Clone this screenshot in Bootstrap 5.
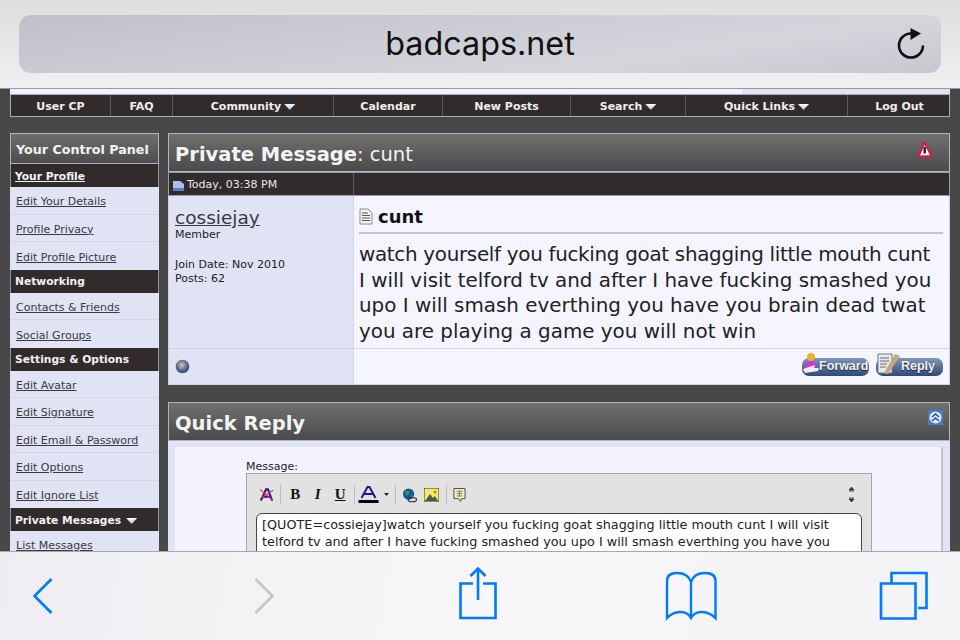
<!DOCTYPE html>
<html lang="en"><head><meta charset="utf-8"><title>badcaps.net</title>
<link href="https://cdn.jsdelivr.net/npm/bootstrap@5.3.0/dist/css/bootstrap.min.css" rel="stylesheet">
<style>
html,body{height:640px;overflow:hidden;background:#484848}
body{font-family:"DejaVu Sans",sans-serif;font-size:11px;color:#1c1c1c}
a{color:#3a3a3f}
.shell{width:960px;height:640px}
.urlzone{height:88px;padding:15px 19px;flex:none;background:linear-gradient(180deg,#dedede,#f0f0f3)}
.urlbox{height:58px;border-radius:12px;background:linear-gradient(172deg,#bfc0ca,#d5d6dc 70%,#c6c7d0);position:relative;font-family:Inter,"Liberation Sans",sans-serif;font-size:32.300px;color:#111}
.reload{position:absolute;right:15px;top:12px}
.webview{flex:1;min-height:0;overflow:hidden;background:#484848;padding:0 10px;border-top:1px solid #9a9a9a}
.strip{height:5px;background:linear-gradient(90deg,#f3f3ff 732px,#dfe3f3 733px)}
.topnav{display:grid;grid-template-columns:100px 62px 161px 109px 128px 115px 162px 103px;height:23px;background:#312b2b;border:1px solid #a9abb8}
.topnav a{display:flex;align-items:center;justify-content:center;gap:3px;padding-top:3px;color:#eee;font-weight:700;font-size:11px;text-decoration:none;border-right:1px solid #5a5a60}
.topnav a:last-child{border-right:0}
.tri{width:11px;height:6px;flex:none;background:linear-gradient(#fff,#9fc3e4);clip-path:polygon(0 0,100% 0,50% 100%)}
.columns{gap:9px;margin-top:16px}
.sidepane{width:149px;flex:none;background:#dfe3f3}
.sidehead{height:31px;border:1px solid #aeb2c8;background:linear-gradient(#6e6e6e,#4d4d4d);color:#f2f2f2;font-weight:700;font-size:12.700px;padding:2px 0 0 5px;display:flex;align-items:center}
.sidesec{height:23px;background:#312b2b;color:#f2f2f2;font-weight:700;font-size:10.700px;padding:3px 0 0 4px;display:flex;align-items:center;gap:5px;border:1px solid #8f90a0;border-width:0 1px}
.sidesec a{color:#f2f2f2}
.sidelink{height:27.500px;display:flex;align-items:center;padding:4px 0 0 6px;border-bottom:1px solid #d2d6e6;font-size:11px}
.sidelink.endrow{border-bottom:0}
.mainpane{flex:1;min-width:0}
.panelhead{height:39px;border:1px solid #b0b3c4;background:linear-gradient(#707070,#4a4a4a);color:#f4f4f4;font-size:19.500px;padding:5px 0 0 6px;display:flex;align-items:center;justify-content:space-between}
.warnico{margin:-12px 16px 0 0}
.collapseico{margin:-14px 6px 0 0}
.datebar{height:24px;background:#312b2b;border:1px solid #9a9caa;display:flex;color:#e8e8e8;font-size:11px}
.datecell{width:185px;border-right:1px solid #5a5a60;display:flex;align-items:center;gap:3px;padding:3px 0 0 4px}
.msgrow{display:flex;height:152px;border-left:1px solid #cfd3e4;border-right:1px solid #cfd3e4}
.authorcol{width:185px;flex:none;background:#dfe3f3;border-right:1px solid #d2d6e6;padding:12px 6px;line-height:14px}
.authorcol a{font-size:18.500px;line-height:20px;display:block}
.bodycol{flex:1;min-width:0;background:#f5f5ff;padding:10px 6px 0 5px}
.posttitle{font-size:18px;font-weight:700;color:#111;display:flex;align-items:center;gap:5px;height:28px;border-bottom:2px solid #c4c5cd;padding-bottom:6px}
.posttext{font-size:19.900px;line-height:25.500px;margin-top:8px;color:#222;white-space:nowrap}
.tightline{letter-spacing:-.3px}
.footrow{display:flex;height:37px;border:1px solid #cfd3e4}
.footleft{width:185px;background:#dfe3f3;border-right:1px solid #d2d6e6;display:flex;align-items:center;padding-left:6px}
.footright{flex:1;background:#f5f5ff;display:flex;align-items:center;justify-content:flex-end;gap:7px;padding:0 6px}
.pillbtn{height:18px;border-radius:7px;background:linear-gradient(#7f96bb,#2e4a78);color:#f3f3f3;font-family:"Liberation Sans",sans-serif;font-weight:700;font-size:12.500px;display:flex;align-items:center;position:relative;text-shadow:0 1px 1px #223}
.pillfwd{width:67px;padding-left:17px}
.pillrep{width:67px;padding-left:25px}
.pillico{position:absolute;left:0;top:-6px}
.replyzone{margin-top:17px}
.replybody{background:#dfe3f3;padding:6px 7px 0}
.replyinner{background:#f3f3fe;border-right:2px solid #c4c5cd;height:200px;padding:12px 0 0 71px}
.editorbox{width:626px;height:200px;margin-top:-3px;background:#e2e2e2;border:1px solid #a6a6a6;padding:0 9px}
.tools{height:39px;padding-top:3px}
.toolsep{width:1px;height:19px;background:#bcbcbc;flex:none}
.tbl{width:22.500px;text-align:center;font-family:"Liberation Serif",serif;font-size:15px;font-weight:700;color:#111}
.tg2{margin-left:2.500px}.tg3{margin-left:3px}.tg5{margin-left:5px}.tg6{margin-left:6px}.tg7{margin-left:7px}
.updown{margin:0 7px 0 auto}
.quotearea{background:#fff;border:1px solid #444;border-radius:6px;padding:2px 5px;font-size:12.800px;line-height:17px;color:#222;height:120px;overflow:hidden}
.iosbar{height:89px;flex:none;border-top:1px solid #a8a8a8;background:linear-gradient(100deg,#eeeef2,#f7f7f9 50%,#f3f3f6)}
</style></head><body>
<div class="shell d-flex flex-column">
<div class="urlzone"><div class="urlbox d-flex align-items-center justify-content-center">badcaps.net
<svg class="reload" width="30" height="34" viewBox="0 0 30 34"><path d="M15 6.500A12 12 0 1 0 27 18.500" fill="none" stroke="#111" stroke-width="2.600"/><path d="M14.500 1 25 6.500 14.500 13z" fill="#111"/></svg>
</div></div>
<div class="webview">
<div class="strip"></div>
<nav class="topnav"><a href="#">User CP</a><a href="#">FAQ</a><a href="#">Community <span class="tri"></span></a><a href="#">Calendar</a><a href="#">New Posts</a><a href="#">Search <span class="tri"></span></a><a href="#">Quick Links <span class="tri"></span></a><a href="#">Log Out</a></nav>
<div class="columns d-flex">
<aside class="sidepane">
<div class="sidehead">Your Control Panel</div>
<div class="sidesec"><a href="#">Your Profile</a></div>
<div class="sidelink"><a href="#">Edit Your Details</a></div>
<div class="sidelink"><a href="#">Profile Privacy</a></div>
<div class="sidelink endrow"><a href="#">Edit Profile Picture</a></div>
<div class="sidesec">Networking</div>
<div class="sidelink"><a href="#">Contacts &amp; Friends</a></div>
<div class="sidelink endrow"><a href="#">Social Groups</a></div>
<div class="sidesec">Settings &amp; Options</div>
<div class="sidelink"><a href="#">Edit Avatar</a></div>
<div class="sidelink"><a href="#">Edit Signature</a></div>
<div class="sidelink"><a href="#">Edit Email &amp; Password</a></div>
<div class="sidelink"><a href="#">Edit Options</a></div>
<div class="sidelink endrow"><a href="#">Edit Ignore List</a></div>
<div class="sidesec">Private Messages <span class="tri"></span></div>
<div class="sidelink"><a href="#">List Messages</a></div>
</aside>
<main class="mainpane">
<div class="panelhead"><span><b>Private Message</b>: cunt</span>
<svg class="warnico" width="16" height="17" viewBox="0 0 16 17"><path d="M7.500 1.500 14.500 15 1.500 15.500z" fill="#fff" stroke="#e8103c" stroke-width="2" stroke-linejoin="round"/><path d="M7.700 6v6.500" stroke="#123" stroke-width="2.400"/></svg></div>
<div class="datebar"><div class="datecell"><svg width="11" height="11" viewBox="0 0 11 11"><path d="M0 1h7l4 3v7H0z" fill="#a9c0ea"/><path d="M0 8h11v3H0z" fill="#5c7cc4"/></svg><span>Today, 03:38 PM</span></div></div>
<div class="msgrow">
<div class="authorcol"><a href="#">cossiejay</a>Member<div class="mt-3">Join Date: Nov 2010<br>Posts: 62</div></div>
<div class="bodycol">
<div class="posttitle"><svg width="14" height="17" viewBox="0 0 14 17"><path d="M1 1h8l4 4v11H1z" fill="#f4f4f4" stroke="#8a8a8a"/><path d="M3 5h6M3 7.500h8M3 10h8M3 12.500h8" stroke="#555"/></svg>cunt</div>
<div class="posttext"><span class="tightline">watch yourself you fucking goat shagging little mouth cunt</span><br>I will visit telford tv and after I have fucking smashed you<br>upo I will smash everthing you have you brain dead twat<br>you are playing a game you will not win</div>
</div></div>
<div class="footrow"><div class="footleft"><svg width="15" height="15" viewBox="0 0 15 15"><defs><radialGradient id="orb" cx=".45" cy=".4"><stop offset="0" stop-color="#c8c8c8"/><stop offset=".7" stop-color="#707078"/><stop offset="1" stop-color="#2f50b0"/></radialGradient></defs><circle cx="7.500" cy="7.500" r="6.800" fill="url(#orb)"/></svg></div>
<div class="footright">
<div class="pillbtn pillfwd"><svg class="pillico" width="18" height="24" viewBox="0 0 18 24"><circle cx="9" cy="5" r="4" fill="#e9b22e"/><path d="M3 18V11q6-4 11 0v7z" fill="#c93ccf"/><path d="M1 17l12-4-1 3 5 0-1 3-13 2z" fill="#eef"/></svg>Forward</div>
<div class="pillbtn pillrep"><svg class="pillico" width="26" height="24" viewBox="0 0 26 24"><path d="M2 2h14v19H2z" fill="#e9e9ea" stroke="#778"/><path d="M4 6h9M4 9h9M4 12h7M4 15h6" stroke="#667"/><path d="M8 21 19 2l5 2-12 18z" fill="#c9a77a"/></svg>Reply</div>
</div></div>
<div class="replyzone">
<div class="panelhead"><b>Quick Reply</b>
<svg class="collapseico" width="15" height="15" viewBox="0 0 15 15"><rect width="15" height="15" fill="#4e79c4"/><circle cx="7.500" cy="7.500" r="6" fill="#dfe8f8"/><path d="M4 7l3.500-3 3.500 3M4 11l3.500-3 3.500 3" fill="none" stroke="#27509c" stroke-width="1.500"/></svg></div>
<div class="replybody"><div class="replyinner">Message:
<div class="editorbox">
<div class="tools d-flex align-items-center">
<svg class="tg3" width="15" height="16" viewBox="0 0 16 16"><path d="M2 14 7.500 2h2L14 14" fill="none" stroke="#20209a" stroke-width="2.200"/><path d="M4 10h8" stroke="#20209a" stroke-width="2"/><path d="M1 2 15 14M1 12 15 3" stroke="#ee3030" stroke-width="1.200"/></svg>
<span class="toolsep tg6"></span>
<b class="tbl tg3">B</b><i class="tbl">I</i><u class="tbl">U</u>
<span class="toolsep tg2"></span>
<svg class="tg3" width="21" height="18" viewBox="0 0 20 18"><path d="M3 12 9 1h2l6 11M6 8h8" fill="none" stroke="#18189a" stroke-width="2"/><rect y="14" width="20" height="3" fill="#000"/></svg>
<svg class="tg5" width="5" height="3" viewBox="0 0 7 4"><path d="M0 0h7L3.500 4z" fill="#222"/></svg>
<span class="toolsep tg6"></span>
<svg class="tg6" width="15" height="16" viewBox="0 0 16 16"><circle cx="7" cy="7" r="6" fill="#1f4ea8"/><path d="M3 3l5 1-1 4-3 0zM9 8l3 1-2 3z" fill="#2f9b36"/><ellipse cx="11" cy="13" rx="4.500" ry="2.200" fill="none" stroke="#333" stroke-width="1.300"/></svg>
<svg class="tg7" width="15" height="14" viewBox="0 0 15 14"><rect width="15" height="14" fill="#f4ea6c" stroke="#333"/><path d="M1 13 6 6l3 4 2-2 3 5z" fill="#555"/><circle cx="11" cy="4" r="1.500" fill="#c8821e"/></svg>
<span class="toolsep tg7"></span>
<svg class="tg6" width="13" height="16" viewBox="0 0 14 16"><path d="M1 1h12v11H9l-1 3-2-3H1z" fill="#f4f0b8" stroke="#444"/><path d="M4 4h6M4 6.500h6M4 9h6M7 3v7" stroke="#777"/></svg>
<svg class="updown" width="7" height="17" viewBox="0 0 7 17"><path d="M3.500 1 6 4H1zM1 5h5M1 12h5M3.500 16 6 13H1z" fill="#333" stroke="#333" stroke-width=".8"/></svg>
</div>
<div class="quotearea">[QUOTE=cossiejay]watch yourself you fucking goat shagging little mouth cunt I will visit telford tv and after I have fucking smashed you upo I will smash everthing you have you</div>
</div></div></div>
</div>
</main>
</div>
</div>
<div class="iosbar">
<svg width="960" height="88" viewBox="0 552 960 88" class="d-block" fill="none" stroke="#007aff" stroke-width="2.600">
<path d="M51.500 579 34.500 596 51.500 613"/>
<path d="M255.500 579 272.500 596 255.500 613" stroke="#c5c5c5"/>
<path d="M473 583.500H460.500V618H495.500V583.500H483M478 600V569M470.500 576 478 568.500 485.500 576"/>
<path stroke-width="2.400" d="M667 618V581C667 575 671 573 677 573 684 573 689 576 691 582 693 576 698 573 705 573 711 573 715.500 575 715.500 581V618C708 611 696 609 691 618 686 609 674 611 667 618ZM691 582V618"/>
<path d="M881 583.500H915.500V618.500H881zM891.500 583V573H926.500V608H918"/>
</svg>
</div>
</div>
</body></html>
